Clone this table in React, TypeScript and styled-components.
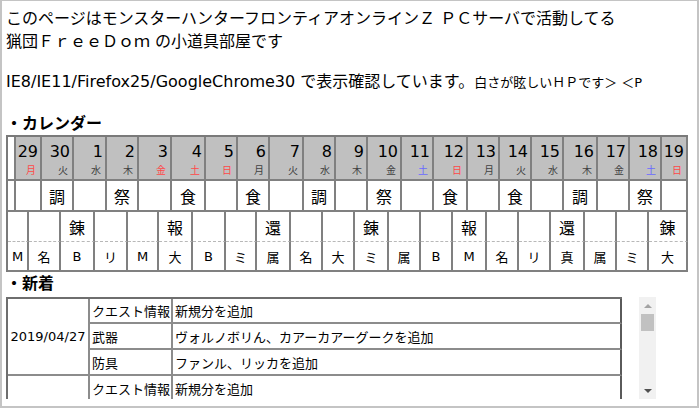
import React from "react";
import styled, { createGlobalStyle } from "styled-components";

const GlobalStyle = createGlobalStyle`
  html, body { margin: 0; padding: 0; background: #fff; }
`;

type Tone = "n" | "r" | "b";
interface Day { d: number; w: string; t: Tone; }

const DAYS: Day[] = [
  { d: 29, w: "月", t: "r" }, { d: 30, w: "火", t: "n" }, { d: 1, w: "水", t: "n" },
  { d: 2, w: "木", t: "n" }, { d: 3, w: "金", t: "r" }, { d: 4, w: "土", t: "r" },
  { d: 5, w: "日", t: "r" }, { d: 6, w: "月", t: "n" }, { d: 7, w: "火", t: "n" },
  { d: 8, w: "水", t: "n" }, { d: 9, w: "木", t: "n" }, { d: 10, w: "金", t: "n" },
  { d: 11, w: "土", t: "b" }, { d: 12, w: "日", t: "r" }, { d: 13, w: "月", t: "n" },
  { d: 14, w: "火", t: "n" }, { d: 15, w: "水", t: "n" }, { d: 16, w: "木", t: "n" },
  { d: 17, w: "金", t: "n" }, { d: 18, w: "土", t: "b" }, { d: 19, w: "日", t: "r" },
];

const EVENTS: Record<number, string> = {
  30: "調", 2: "祭", 4: "食", 6: "食", 8: "調", 10: "祭", 12: "食", 14: "食", 16: "調", 18: "祭",
};

const ROW3 = ["", "", "錬", "", "", "報", "", "", "還", "", "", "錬", "", "", "報", "", "", "還", "", "", "錬"];
const ROW4 = ["M", "名", "B", "リ", "M", "大", "B", "ミ", "属", "名", "大", "ミ", "属", "B", "M", "名", "リ", "真", "属", "ミ", "大"];

const HALVES: number[][] = [
  [13, 13], [19, 13], [21, 12], [21, 11], [20, 13], [21, 13], [20, 12], [19, 13], [21, 13], [19, 13],
  [19, 13], [21, 13], [19, 13], [19, 15], [19, 13], [19, 13], [19, 13], [21, 13], [19, 13], [19, 13],
];
const COLS = ["8px", ...HALVES.flat().map((w) => `${w}px`), "26px"].join(" ");

const TONES: Record<Tone, string> = { n: "#404040", r: "#ff4848", b: "#6a6aff" };

const Frame = styled.div`
  box-sizing: border-box;
  width: 699px;
  height: 408px;
  border: 2px solid #c4c4c4;
  border-top-width: 1px;
  padding: 6px 0 0 4px;
  overflow: hidden;
  font-family: "DejaVu Sans", "Noto Sans CJK JP", sans-serif;
  color: #000;
`;

const Intro = styled.p<{ $top?: number }>`
  margin: ${(p) => p.$top ?? 0}px 0 0;
  font-size: 16px;
  line-height: 23px;
  white-space: nowrap;
`;

const Small = styled.span`
  font-size: 13px;
`;

const Heading = styled.h2<{ $top: number }>`
  margin: ${(p) => p.$top}px 0 0;
  font-size: 16px;
  line-height: 23px;
  font-weight: bold;
`;

const Calendar = styled.div`
  display: grid;
  grid-template-columns: ${COLS};
  grid-template-rows: 44px 31px 30px 30px;
  width: 682px;
  box-sizing: border-box;
  border-left: 2px solid #7a7a7a;
  border-top: 2px solid #7a7a7a;
`;

const Cell = styled.div<{ $span: number; $dash?: boolean; $small?: boolean }>`
  grid-column: span ${(p) => p.$span};
  box-sizing: border-box;
  border-right: 2px solid #808080;
  border-bottom: ${(p) => (p.$dash ? "1px dashed #b8b8b8" : "2px solid #808080")};
  display: flex;
  align-items: center;
  justify-content: center;
  font-size: ${(p) => (p.$small ? 13 : 16)}px;
  background: #fff;
`;

const HeadCell = styled.div<{ $span: number }>`
  grid-column: span ${(p) => p.$span};
  box-sizing: border-box;
  border-right: 2px solid #808080;
  border-bottom: 2px solid #808080;
  background: #c0c0c0;
  display: flex;
  flex-direction: column;
  align-items: flex-end;
  padding: 5px 2px 0 0;
`;

const DayNum = styled.span`
  font-size: 16px;
  line-height: 20px;
`;

const Weekday = styled.span<{ $tone: Tone }>`
  font-size: 10px;
  line-height: 12px;
  margin-top: 3px;
  padding-right: 2px;
  color: ${(p) => TONES[p.$tone]};
`;

const NewsBox = styled.div`
  display: flex;
  width: 650px;
  height: 102px;
  margin-top: 2px;
`;

const NewsViewport = styled.div`
  flex: 1;
  overflow: hidden;
`;

const NewsTable = styled.div`
  display: grid;
  grid-template-columns: 82px 83px 449px;
  grid-template-rows: 25px;
  grid-auto-rows: 26px;
  width: 616px;
  box-sizing: border-box;
  border-left: 2px solid #6e6e6e;
  border-top: 2px solid #6e6e6e;
`;

const NewsCell = styled.div<{ $edge?: boolean; $date?: boolean }>`
  box-sizing: border-box;
  border-right: 2px solid ${(p) => (p.$edge ? "#5a5a5a" : "#8c8c8c")};
  border-bottom: 2px solid #8c8c8c;
  padding: 0 2px;
  display: flex;
  align-items: center;
  justify-content: ${(p) => (p.$date ? "center" : "flex-start")};
  grid-row: ${(p) => (p.$date ? "span 3" : "auto")};
  font-size: 13px;
  white-space: nowrap;
`;

const Scrollbar = styled.div`
  width: 17px;
  background: #f1f1f1;
  display: flex;
  flex-direction: column;
`;

const ScrollButton = styled.div`
  height: 17px;
  display: flex;
  align-items: center;
  justify-content: center;
`;

const Thumb = styled.div`
  height: 17px;
  margin: 0 2px;
  background: #c1c1c1;
`;

const Track = styled.div`
  flex: 1;
`;

interface NewsRow { cat: string; text: string; }
interface NewsGroup { date: string; rows: NewsRow[]; }

const NEWS: NewsGroup[] = [
  {
    date: "2019/04/27",
    rows: [
      { cat: "クエスト情報", text: "新規分を追加" },
      { cat: "武器", text: "ヴォルノボリん、カアーカアーグークを追加" },
      { cat: "防具", text: "ファンル、リッカを追加" },
    ],
  },
  {
    date: "",
    rows: [
      { cat: "クエスト情報", text: "新規分を追加" },
      { cat: "", text: "" },
      { cat: "", text: "" },
    ],
  },
];

export default function App() {
  return (
    <>
      <GlobalStyle />
      <Frame>
        <Intro>
          このページはモンスターハンターフロンティアオンラインＺ ＰＣサーバで活動してる
          <br />
          猟団ＦｒｅｅＤｏｍ の小道具部屋です
        </Intro>
        <Intro $top={17}>
          IE8/IE11/Firefox25/GoogleChrome30 で表示確認しています。<Small>白さが眩しいＨＰです＞ ＜P</Small>
        </Intro>

        <Heading $top={18}>・カレンダー</Heading>
        <Calendar>
          <Cell $span={1} />
          {DAYS.map((day, i) => (
            <HeadCell key={`h${i}`} $span={i === DAYS.length - 1 ? 1 : 2}>
              <DayNum>{day.d}</DayNum>
              <Weekday $tone={day.t}>{day.w}</Weekday>
            </HeadCell>
          ))}
          <Cell $span={1} />
          {DAYS.map((day, i) => (
            <Cell key={`e${i}`} $span={i === DAYS.length - 1 ? 1 : 2}>
              {EVENTS[day.d] ?? ""}
            </Cell>
          ))}
          {ROW3.map((t, i) => (
            <Cell key={`r3${i}`} $span={2} $dash>
              {t}
            </Cell>
          ))}
          {ROW4.map((t, i) => (
            <Cell key={`r4${i}`} $span={2} $small>
              {t}
            </Cell>
          ))}
        </Calendar>

        <Heading $top={0}>・新着</Heading>
        <NewsBox>
          <NewsViewport>
            <NewsTable>
              {NEWS.map((g, gi) => (
                <React.Fragment key={gi}>
                  {g.rows.map((r, ri) => (
                    <React.Fragment key={ri}>
                      {ri === 0 && <NewsCell $date>{g.date}</NewsCell>}
                      <NewsCell>{r.cat}</NewsCell>
                      <NewsCell $edge>{r.text}</NewsCell>
                    </React.Fragment>
                  ))}
                </React.Fragment>
              ))}
            </NewsTable>
          </NewsViewport>
          <Scrollbar>
            <ScrollButton>
              <svg width="8" height="4" viewBox="0 0 8 4">
                <polygon points="0,4 4,0 8,4" fill="#a3a3a3" />
              </svg>
            </ScrollButton>
            <Thumb />
            <Track />
            <ScrollButton>
              <svg width="8" height="4" viewBox="0 0 8 4">
                <polygon points="0,0 8,0 4,4" fill="#505050" />
              </svg>
            </ScrollButton>
          </Scrollbar>
        </NewsBox>
      </Frame>
    </>
  );
}
